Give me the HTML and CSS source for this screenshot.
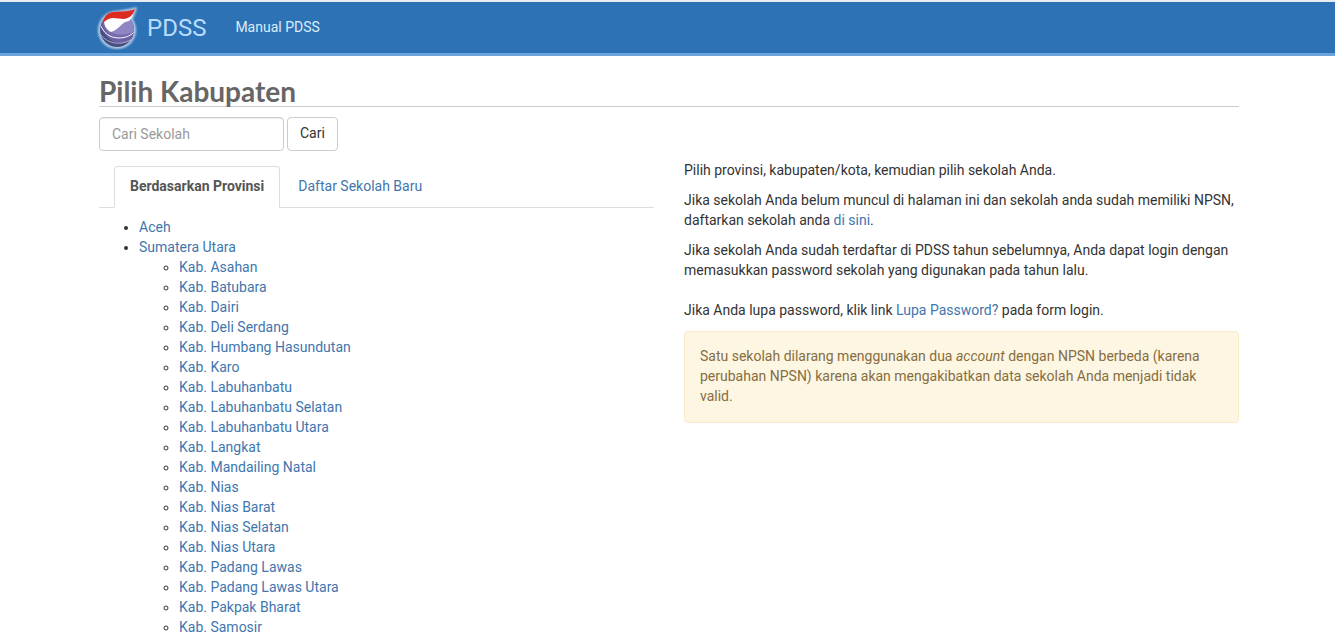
FILE: index.html
```html
<!DOCTYPE html>
<html lang="id">
<head>
    <meta charset="UTF-8">
    <meta name="viewport" content="width=device-width, initial-scale=1.0">
    <title>PDSS - Pilih Kabupaten</title>
    <link rel="stylesheet" href="styles.css">
</head>
<body>
    <nav class="navbar">
        <div class="container navbar-inner">
            <a class="navbar-brand" href="#">
                <svg class="logo" viewBox="0 0 44 44" aria-hidden="true">
                    <defs>
                        <filter id="glow" x="-20%" y="-20%" width="140%" height="140%">
                            <feGaussianBlur stdDeviation="1"/>
                        </filter>
                        <clipPath id="globe">
                            <circle cx="22" cy="24" r="17"/>
                        </clipPath>
                    </defs>
                    <!-- Halo -->
                    <g fill="#b9d0ea" filter="url(#glow)">
                        <circle cx="22" cy="24" r="19"/>
                        <path d="M8 13C12 3 26 6 42 1C40 9 38 14 34 17Z"/>
                    </g>
                    <!-- Globe -->
                    <circle cx="22" cy="24" r="17" fill="#474f80"/>
                    <g clip-path="url(#globe)">
                        <path d="M6 15C7 28 15 37 26 37C33 37 38 33 40 29V10H6Z" fill="#6b61a5"/>
                        <path d="M8 14C8 24 14 31 24 31C31 31 37 28 40 24V10H8Z" fill="#766cae"/>
                        <path d="M16 26C22 24 25 16 40 12V25C33 29 23 30 16 26Z" fill="#8e87c4"/>
                        <path d="M5 18C8 27 15 32 24 32C31 32 37 29 40 25" fill="none" stroke="#fff" stroke-width="1"/>
                        <path d="M6 29C13 38 27 40 37 33" fill="none" stroke="#aaa9cd" stroke-width="1"/>
                    </g>
                    <!-- Flag -->
                    <path d="M9 15C14 10 20 12 26 12C32 12 35 10 38 8C37 11 36 13 34 15C26 16 24 24 16 26C12 24 9 20 9 15Z" fill="#fff"/>
                    <path d="M8 17C9 10 13 6 19 6C27 5 33 6 40 3C38 9 35 12 29 13C21 13 16 9 8 17Z" fill="#dc2b20"/>
                </svg>
                <span>PDSS</span>
            </a>
            <a class="navbar-link" href="#">Manual PDSS</a>
        </div>
    </nav>

    <main class="container">
        <h1 class="page-title">Pilih Kabupaten</h1>

        <form class="search-form">
            <input class="form-control" type="text" placeholder="Cari Sekolah" aria-label="Cari Sekolah">
            <button class="btn" type="submit">Cari</button>
        </form>

        <div class="row">
            <section class="col">
                <div class="tabs">
                    <a class="tab active" href="#">Berdasarkan Provinsi</a>
                    <a class="tab" href="#">Daftar Sekolah Baru</a>
                </div>

                <ul class="region-list">
                    <li><a href="#">Aceh</a></li>
                    <li><a href="#">Sumatera Utara</a>
                        <ul>
                            <li><a href="#">Kab. Asahan</a></li>
                            <li><a href="#">Kab. Batubara</a></li>
                            <li><a href="#">Kab. Dairi</a></li>
                            <li><a href="#">Kab. Deli Serdang</a></li>
                            <li><a href="#">Kab. Humbang Hasundutan</a></li>
                            <li><a href="#">Kab. Karo</a></li>
                            <li><a href="#">Kab. Labuhanbatu</a></li>
                            <li><a href="#">Kab. Labuhanbatu Selatan</a></li>
                            <li><a href="#">Kab. Labuhanbatu Utara</a></li>
                            <li><a href="#">Kab. Langkat</a></li>
                            <li><a href="#">Kab. Mandailing Natal</a></li>
                            <li><a href="#">Kab. Nias</a></li>
                            <li><a href="#">Kab. Nias Barat</a></li>
                            <li><a href="#">Kab. Nias Selatan</a></li>
                            <li><a href="#">Kab. Nias Utara</a></li>
                            <li><a href="#">Kab. Padang Lawas</a></li>
                            <li><a href="#">Kab. Padang Lawas Utara</a></li>
                            <li><a href="#">Kab. Pakpak Bharat</a></li>
                            <li><a href="#">Kab. Samosir</a></li>
                        </ul>
                    </li>
                </ul>
            </section>

            <section class="col info">
                <p>Pilih provinsi, kabupaten/kota, kemudian pilih sekolah Anda.</p>
                <p>Jika sekolah Anda belum muncul di halaman ini dan sekolah anda sudah memiliki NPSN, daftarkan sekolah anda <a href="#">di sini</a>.</p>
                <p>Jika sekolah Anda sudah terdaftar di PDSS tahun sebelumnya, Anda dapat login dengan memasukkan password sekolah yang digunakan pada tahun lalu.<br><br>Jika Anda lupa password, klik link <a href="#">Lupa Password?</a> pada form login.</p>
                <div class="alert">
                    Satu sekolah dilarang menggunakan dua <em>account</em> dengan NPSN berbeda (karena perubahan NPSN) karena akan mengakibatkan data sekolah Anda menjadi tidak valid.
                </div>
            </section>
        </div>
    </main>
</body>
</html>
```
FILE: styles.css
```css
* {
    box-sizing: border-box;
}

body {
    margin: 0;
    font-family: Roboto, "Liberation Sans", sans-serif;
    font-size: 14px;
    line-height: 20px;
    color: #333;
    background: #fff;
    border-top: 2px solid #e9edf3;
}

a {
    color: #3f76ae;
    text-decoration: none;
}

a:hover {
    text-decoration: underline;
}

.container {
    max-width: 1173px;
    margin: 0 auto;
    padding: 0 15px 0 18px;
}

/* Navbar */
.navbar {
    background: #2d72b5;
    border-bottom: 3px solid #6ba3dc;
}

.navbar-inner {
    display: flex;
    align-items: center;
    gap: 29px;
    height: 51px;
}

.navbar-brand {
    display: flex;
    align-items: center;
    gap: 8px;
    margin-left: -4px;
    font-size: 24px;
    color: #b9dcff;
}

.logo {
    width: 44px;
    height: 44px;
}

.navbar-link {
    padding-bottom: 2px;
    color: #dcebfa;
}

/* Heading and search */
.page-title {
    margin: 20px 0 10px;
    border-bottom: 1px solid #ccc;
    font-family: Lato, sans-serif;
    font-size: 28px;
    line-height: 30px;
    font-weight: 700;
    color: #666;
}

.search-form {
    display: flex;
    gap: 3px;
    margin-bottom: 15px;
}

.form-control {
    width: 185px;
    height: 34px;
    padding: 6px 12px;
    border: 1px solid #ccc;
    border-radius: 4px;
    font: inherit;
    color: #555;
    box-shadow: inset 0 1px 1px rgba(0, 0, 0, 0.075);
}

.form-control::placeholder {
    color: #999;
}

.btn {
    height: 34px;
    padding: 5px 12px 7px;
    border: 1px solid #ccc;
    border-radius: 4px;
    background: #fff;
    font: inherit;
    color: #333;
    cursor: pointer;
}

.btn:hover {
    background: #e6e6e6;
}

/* Columns */
.row {
    display: flex;
    gap: 30px;
}

.col {
    flex: 1;
    min-width: 0;
}

/* Tabs */
.tabs {
    display: flex;
    gap: 2px;
    padding-left: 15px;
    border-bottom: 1px solid #ddd;
}

.tab {
    margin-bottom: -1px;
    padding: 9px 15px 11px;
    border: 1px solid transparent;
    border-radius: 4px 4px 0 0;
}

.tab.active {
    border-color: #ddd;
    border-bottom-color: #fff;
    background: #fff;
    font-weight: 700;
    color: #555;
}

.region-list {
    margin: 9px 0 0;
}

.region-list ul {
    margin: 0;
}

.info {
    margin-top: -6px;
}

.info p {
    margin: 0 0 10px;
}

.alert {
    margin-top: 11px;
    padding: 14px 15px 16px;
    border: 1px solid #f8ebcd;
    border-radius: 4px;
    background: #fdf6e2;
    color: #866d41;
}
```
